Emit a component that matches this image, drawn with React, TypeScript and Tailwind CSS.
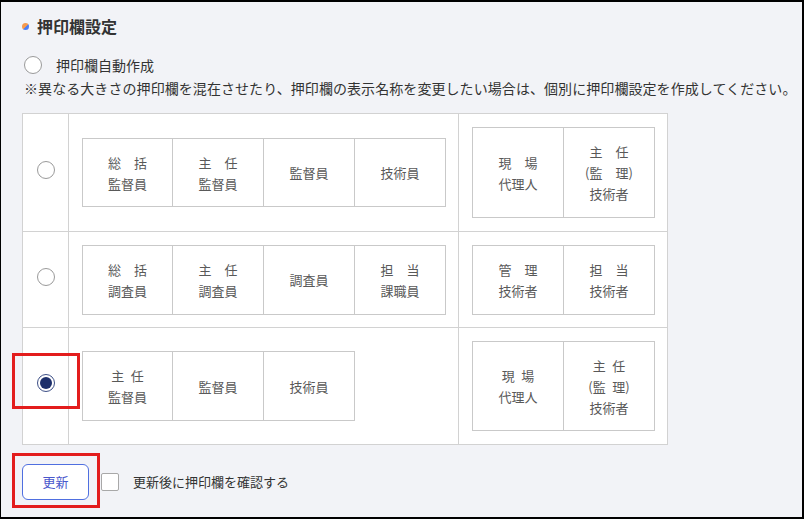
import clsx from "clsx";

type StampCell = string[];

type StampRow = {
  selected: boolean;
  left: StampCell[];
  right: StampCell[];
  height: string;
  leftHeight: string;
  rightHeight: string;
};

const rows: StampRow[] = [
  {
    selected: false,
    height: "h-[117px]",
    leftHeight: "h-[69px]",
    rightHeight: "h-[91px]",
    left: [["総　括", "監督員"], ["主　任", "監督員"], ["監督員"], ["技術員"]],
    right: [["現　場", "代理人"], ["主　任", "(監　理)", "技術者"]],
  },
  {
    selected: false,
    height: "h-[96px]",
    leftHeight: "h-[70px]",
    rightHeight: "h-[70px]",
    left: [["総　括", "調査員"], ["主　任", "調査員"], ["調査員"], ["担　当", "課職員"]],
    right: [["管　理", "技術者"], ["担　当", "技術者"]],
  },
  {
    selected: true,
    height: "h-[117px]",
    leftHeight: "h-[70px]",
    rightHeight: "h-[90px]",
    left: [["主\u2002任", "監督員"], ["監督員"], ["技術員"]],
    right: [["現\u2002場", "代理人"], ["主\u2002任", "(監\u2002理)", "技術者"]],
  },
];

const Radio = ({ checked }: { checked?: boolean }) =>
  checked ? (
    <span className="flex h-[18px] w-[18px] items-center justify-center rounded-full border border-[#3d4f86] bg-white">
      <span className="h-[12px] w-[12px] rounded-full bg-[#1d2f6b]" />
    </span>
  ) : (
    <span className="block h-[18px] w-[18px] rounded-full border border-[#9a9a9a] bg-white" />
  );

const StampBox = ({ cells, height, narrowFirst }: { cells: StampCell[]; height: string; narrowFirst?: boolean }) => (
  <div className={clsx("flex border-y border-l border-[#c9c9c9]", height)}>
    {cells.map((lines, i) => (
      <div
        key={i}
        className={clsx(
          "flex flex-col items-center justify-center border-r border-[#c9c9c9] text-[13px] leading-[21px] text-[#595959]",
          i === 0 && narrowFirst ? "w-[90px]" : "w-[91px]",
        )}
      >
        {lines.map((line) => (
          <span key={line} className="whitespace-pre">
            {line}
          </span>
        ))}
      </div>
    ))}
  </div>
);

export default function App() {
  return (
    <div
      className="relative h-[519px] w-[804px] border-b-2 border-l border-r-2 border-t-2 border-black bg-[#f2f3f7] pl-[21px] pt-[12px] text-[#333]"
      style={{ fontFamily: '"Noto Sans CJK JP", "Noto Sans", sans-serif' }}
    >
      <h2 className="flex h-[24px] items-center gap-[8px] text-[16px] font-bold leading-[24px]">
        <span className="h-[7px] w-[7px] rounded-full bg-[linear-gradient(135deg,#f59a4e_50%,#4d7ef3_50%)]" />
        押印欄設定
      </h2>

      <label className="ml-[2px] mt-[17px] flex h-[20px] items-center gap-[14px] text-[14px]">
        <Radio />
        押印欄自動作成
      </label>
      <p className="ml-[2px] mt-[3px] text-[14px] leading-[20px] tracking-[0.07px]">
        ※異なる大きさの押印欄を混在させたり、押印欄の表示名称を変更したい場合は、個別に押印欄設定を作成してください。
      </p>

      <div className="mt-[15px] w-[646px] border border-[#d2d2d2] bg-white">
        {rows.map((row, i) => (
          <div
            key={i}
            className={clsx("flex", row.height, i > 0 && "border-t border-[#d2d2d2]")}
          >
            <div className="flex w-[45px] items-center justify-center pb-[6px]">
              <Radio checked={row.selected} />
            </div>
            <div className="flex w-[390px] items-center border-l border-[#d2d2d2] pl-[13px]">
              <StampBox cells={row.left} height={row.leftHeight} narrowFirst />
            </div>
            <div className="flex w-[209px] items-center border-l border-[#d2d2d2] pl-[13px]">
              <StampBox cells={row.right} height={row.rightHeight} />
            </div>
          </div>
        ))}
      </div>

      <div className="mt-[19px] flex items-center">
        <button className="h-[36px] w-[67px] rounded-[6px] border border-[#4f6fe0] bg-white text-[13px] text-[#4a58cc]">
          更新
        </button>
        <span className="ml-[12px] h-[18px] w-[18px] rounded-[2px] border border-[#a8a8a8] bg-white" />
        <span className="ml-[14px] text-[13px]">更新後に押印欄を確認する</span>
      </div>

      {/* annotation frames */}
      <div className="absolute left-[11px] top-[351px] h-[56px] w-[68px] border-[3px] border-[#e31d1d]" />
      <div className="absolute left-[11px] top-[451px] h-[55px] w-[88px] border-[3px] border-[#e31d1d]" />
    </div>
  );
}
